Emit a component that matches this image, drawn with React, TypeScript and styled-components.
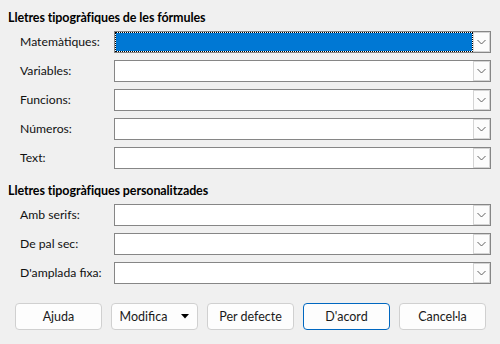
import styled, { createGlobalStyle } from "styled-components";

const GlobalStyle = createGlobalStyle`
  html, body {
    margin: 0;
    padding: 0;
    background: #f0f0f0;
  }
  body {
    font-family: Lato, "Noto Sans", sans-serif;
    font-size: 12px;
    color: #000;
  }
`;

const Dialog = styled.div`
  width: 500px;
  height: 344px;
  box-sizing: border-box;
  padding: 10px 9px 0 8px;
  display: flex;
  flex-direction: column;
`;

const Section = styled.section<{ $gapBelow: number }>`
  display: flex;
  flex-direction: column;
  margin-bottom: ${(props) => props.$gapBelow}px;
`;

const Heading = styled.h2`
  margin: 0 0 5px 0;
  font-size: 12.5px;
  font-weight: 700;
  line-height: 16px;
  letter-spacing: -0.1px;
`;

const Rows = styled.div`
  display: flex;
  flex-direction: column;
  gap: 7px;
  padding-left: 12px;
`;

const Row = styled.div`
  display: grid;
  grid-template-columns: 94px 377px;
  align-items: center;
  height: 22px;
`;

const Label = styled.label`
  font-size: 12.2px;
  line-height: 16px;
  color: #111;
`;

const Combo = styled.div`
  height: 22px;
  box-sizing: border-box;
  border: 1px solid #868686;
  background: #fff;
  display: flex;
`;

const Field = styled.div<{ $focused?: boolean }>`
  flex: 1;
  box-sizing: border-box;
  background: ${(props) => (props.$focused ? "#0078d4" : "#fff")};
  border: 1px ${(props) => (props.$focused ? "dotted #000" : "solid transparent")};
  background-clip: padding-box;
`;

const DropButton = styled.div`
  width: 17px;
  box-sizing: border-box;
  border: 1px solid #d4d4d4;
  background: #fcfcfc;
  display: flex;
  align-items: center;
  justify-content: center;
`;

const Buttons = styled.div`
  display: flex;
  gap: 9px;
  padding-left: 7px;
`;

const Button = styled.button<{ $primary?: boolean }>`
  width: 87px;
  height: 27px;
  box-sizing: border-box;
  border: 1px solid ${(props) => (props.$primary ? "#0067c0" : "#d0d0d0")};
  border-radius: 4px;
  background: #fdfdfd;
  font-family: Lato, "Noto Sans", sans-serif;
  font-size: 12.5px;
  color: #1a1a1a;
  display: flex;
  align-items: center;
  justify-content: center;
  gap: 14px;
  padding: 0;
`;

function Chevron() {
  return (
    <svg width="9" height="6" viewBox="0 0 9 6">
      <path d="M0.5 1 L4.5 5 L8.5 1" fill="none" stroke="#606060" strokeWidth="1" />
    </svg>
  );
}

function Caret() {
  return (
    <svg width="8" height="5" viewBox="0 0 8 5">
      <path d="M0 0 H8 L4 4.5 Z" fill="#000" />
    </svg>
  );
}

interface IFontRow {
  label: string;
  focused?: boolean;
}

const formulaFonts: IFontRow[] = [
  { label: "Matemàtiques:", focused: true },
  { label: "Variables:" },
  { label: "Funcions:" },
  { label: "Números:" },
  { label: "Text:" },
];

const customFonts: IFontRow[] = [
  { label: "Amb serifs:" },
  { label: "De pal sec:" },
  { label: "D'amplada fixa:" },
];

function FontRows({ rows }: { rows: IFontRow[] }) {
  return (
    <Rows>
      {rows.map((row) => (
        <Row key={row.label}>
          <Label>{row.label}</Label>
          <Combo>
            <Field $focused={row.focused} />
            <DropButton>
              <Chevron />
            </DropButton>
          </Combo>
        </Row>
      ))}
    </Rows>
  );
}

export default function App() {
  return (
    <>
      <GlobalStyle />
      <Dialog>
        <Section $gapBelow={14}>
          <Heading>Lletres tipogràfiques de les fórmules</Heading>
          <FontRows rows={formulaFonts} />
        </Section>
        <Section $gapBelow={19}>
          <Heading>Lletres tipogràfiques personalitzades</Heading>
          <FontRows rows={customFonts} />
        </Section>
        <Buttons>
          <Button>Ajuda</Button>
          <Button>
            Modifica
            <Caret />
          </Button>
          <Button>Per defecte</Button>
          <Button $primary>D'acord</Button>
          <Button>Cancel·la</Button>
        </Buttons>
      </Dialog>
    </>
  );
}
